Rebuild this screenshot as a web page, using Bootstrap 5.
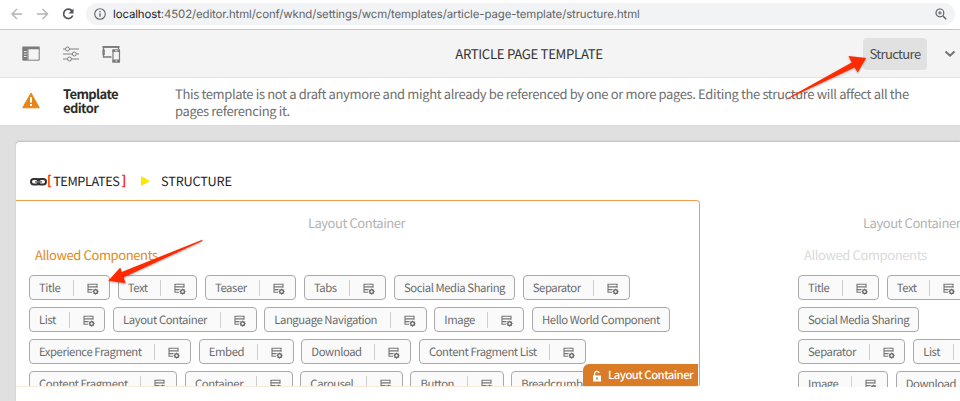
<!DOCTYPE html>
<html lang="en">
<head>
<meta charset="utf-8">
<title>Article Page Template</title>
<meta name="viewport" content="width=device-width, initial-scale=1">
<link href="https://cdn.jsdelivr.net/npm/bootstrap@5.3.0/dist/css/bootstrap.min.css" rel="stylesheet">
<style>
body{font-family:"Noto Sans CJK SC","Open Sans",sans-serif;font-size:13px;color:#323232;height:401px;background:#e0e0e0;text-rendering:geometricPrecision}
.browser{height:30px;background:#fff;border-bottom:1px solid #c6c6c6;padding:3px 5px 4px 10px}
.browser .navs{width:76px}
.address{height:22px;background:#f1f3f4;border-radius:11px;font:11.4px/22px Inter,"Liberation Sans",sans-serif;color:#5f6368;padding:0 8px 0 8px}
.address b{font-weight:400;color:#202124}
.url{margin-left:7px;letter-spacing:-.1px}
.toolbar{height:48px;background:#f4f4f4;border-bottom:1px solid #e2e2e2}
.tools{width:369px;padding-left:22px;gap:23px}
.page-name{font-size:13.2px;letter-spacing:-.32px;padding-top:1px;color:#323232}
.modes{width:271px;gap:17px;padding-right:4px}
.mode{width:64px;height:32px;border-radius:4px;background:#e1e1e1;font-size:13px;letter-spacing:-.63px;color:#4b4b4b;line-height:32px;padding:0;border:0;text-align:center}
.notice{height:47px;background:#fff;padding:6px 0 0 22px}
.notice-title{width:112px;margin-left:23px;letter-spacing:-.6px;font-weight:700;line-height:14px;color:#2c2c2c;padding-top:3px}
.notice-text{width:770px;line-height:17.4px;color:#6e6e6e;letter-spacing:-.367px;padding-top:1px}
.stage{height:276px;padding:16px 0 0 16px;background:#e0e0e0;border-top:1px solid #dadada}
.sheet{height:260px;background:#fff;border-radius:4px 0 0 0;box-shadow:0 -1px 2px #bcbcbc}
.crumbs{height:58px;padding:21px 0 0 14px;font-size:12.7px;line-height:36px;letter-spacing:-.17px;color:#222}
.crumbs b{color:#ff2600;font-weight:700;line-height:33px}
.crumb-root{margin:0 2px 0 1.5px;letter-spacing:-.6px;letter-spacing:-.4px}
.link-mark{margin-top:14px}
.crumb-arrow{margin:13px 11px 0 15px}
.layout-a{width:684px;height:187px;border:1px solid #f0a050;border-left:0;border-bottom-color:#fbe9d9;border-radius:0 4px 4px 0;padding:13px 0 0 13px}
.layout-b{width:260px;height:187px;margin-left:98px;padding:14px 0 0 0}
.cap{line-height:18px;color:#b3b3b3;letter-spacing:-.45px}
.layout-a .cap{text-align:center;margin-left:-15px}
.layout-b .cap{margin-left:65px;white-space:nowrap}
.allowed{line-height:18px;color:#e08a20;margin:14px 0 11px 6px;letter-spacing:-.39px}
.layout-b .allowed{color:#dadada}
.chips{gap:7.7px;margin-bottom:7px}
.chip{height:25px;border:1px solid #aaa;border-radius:4px;background:#fafafa;padding:1px 9px 0;font-size:11.3px;letter-spacing:-.43px;color:#6b6b6b;white-space:nowrap;flex:none}
.chip i{width:1px;height:16px;background:#cfcfcf;margin:0 13px 1px 12.7px}
.chip svg{margin-right:.9px;margin-top:1px}
.owner{right:1px;bottom:0;width:115px;height:22px;background:#da7b27;border-radius:6px 0 0 0;color:#fff;font-size:11.3px;letter-spacing:-.5px;font-weight:500;padding:1px 0 0 9px;white-space:nowrap}
.lock{flex:none;margin-right:4px}
.overlay{left:0;top:0;pointer-events:none;filter:drop-shadow(0 1px 1px rgba(0,0,0,.3))}
</style>
</head>
<body class="overflow-hidden position-relative">
<svg class="d-none">
<symbol id="cfg" viewBox="0 0 12 12"><path d="M5 9.3H1V1.2H10V4.8M1 3.9H10M1 6.6H5.5" fill="none" stroke="#757575" stroke-width="1.1"/><circle cx="8.6" cy="8.6" r="1.9" fill="none" stroke="#6b6b6b" stroke-width="1.4"/><path d="M8.6 5.7v1M8.6 10.5v1M5.7 8.6h1M10.5 8.6h1M6.6 6.6l.6.6M10 10l.6.6M10.6 6.6l-.6.6M7.2 10l-.6.6" stroke="#6b6b6b" stroke-width="1"/></symbol>
</svg>

<header class="browser d-flex align-items-center">
  <div class="navs d-flex align-items-center">
    <svg width="70" height="14" viewBox="0 0 70 14" fill="none" stroke="#b2b4b6" stroke-width="1.4"><path d="M12 7H2M7 2 2 7l5 5M27 7h10M32.500 2l5 5-5 5"/><path d="M62 3.900A4.700 4.700 0 1 0 62.700 8.500" stroke="#505357" stroke-width="1.7"/><path d="M63.500 1.500v5h-5z" fill="#505357" stroke="none"/></svg>
  </div>
  <div class="address flex-fill d-flex align-items-center">
    <svg width="12" height="12" viewBox="0 0 12 12" fill="none" stroke="#5f6368"><circle cx="6" cy="6" r="5.300" stroke-width="1.100"/><path d="M6 5.300v3.500M6 3v1.300" stroke-width="1.300"/></svg>
    <span class="url"><b>localhost</b>:4502/editor.html/conf/wknd/settings/wcm/templates/article-page-template/structure.html</span>
    <svg class="ms-auto" width="12" height="12" viewBox="0 0 12 12" fill="none" stroke="#5f6368" stroke-width="1.200"><circle cx="4.900" cy="4.900" r="3.900"/><path d="M7.800 7.800l3.400 3.400" stroke-width="1.500"/><path d="M3 4.900h3.800M4.900 3v3.800" stroke-width="1"/></svg>
  </div>
</header>

<nav class="toolbar d-flex align-items-center">
  <div class="tools d-flex align-items-center">
    <svg width="18" height="15" viewBox="0 0 18 15"><path d="M.8 2.500V14.200H17.200V2.500M6 3v11" fill="none" stroke="#7b7b7b"/><path d="M.3.500h17.400v2.800H.3zM1 3h4.500v11H1z" fill="#7b7b7b"/><path d="M2 5.500h2.600M2 8h2.600M2 10.500h2.600" stroke="#f4f4f4" stroke-width=".9"/></svg>
    <svg width="16" height="16" viewBox="0 0 16 16" fill="none" stroke="#808080"><path d="M0 3h2.500M6.500 3H16M0 8h9M13.500 8H16M0 13h4.500M8.500 13H16" stroke-width="1.200"/><circle cx="4.500" cy="3" r="2"/><circle cx="11.300" cy="8" r="2"/><circle cx="6.500" cy="13" r="2"/></svg>
    <svg width="19" height="18" viewBox="0 0 19 18" fill="none" stroke="#7b7b7b"><path d="M9.500 12H1.500V2.200H16.500V4" stroke-width="1.300"/><path d="M.5 1h17v1.800H.5zM.5 4.500h2.300v5.500H.5z" fill="#7b7b7b" stroke="none"/><path d="M11 5h6.500v12H11z" stroke-width="1.200"/><path d="M10.500 4.500h7.500V7h-7.500zM10.500 14.500h7.500v3h-7.500z" fill="#7b7b7b" stroke="none"/><path d="M13.500 16h1.500M13 5.800h2.500" stroke="#f4f4f4"/></svg>
  </div>
  <div class="page-name flex-fill text-center">ARTICLE PAGE TEMPLATE</div>
  <div class="modes d-flex align-items-center justify-content-end">
    <button class="mode" type="button">Structure</button>
    <svg width="12" height="8" viewBox="0 0 12 8" fill="none" stroke="#707070" stroke-width="1.900"><path d="M1.500 1.500 6 5.800 10.500 1.500"/></svg>
  </div>
</nav>

<section class="notice d-flex">
  <svg class="mt-2" width="18" height="17" viewBox="0 0 18 17"><path d="M9 1 17.300 15.800H.700z" fill="#e68619" stroke="#e68619" stroke-width="1" stroke-linejoin="round"/><path d="M9 5v5.500M9 12v2" stroke="#fff" stroke-width="2"/></svg>
  <div class="notice-title">Template<br>editor</div>
  <div class="notice-text">This template is not a draft anymore and might already be referenced by one or more pages. Editing the structure will affect all the<br>pages referencing it.</div>
</section>

<main class="stage">
  <div class="sheet">
    <div class="crumbs d-flex">
      <svg class="link-mark" width="17" height="10" viewBox="0 0 17 10" fill="none" stroke="#333" stroke-width="2"><rect x="1" y="2" width="8.500" height="5.500" rx="2.700"/><rect x="7.500" y="2" width="8.500" height="5.500" rx="2.700"/><path d="M5 4.800h7" stroke="#777" stroke-width="1.500"/></svg>
      <b>[</b><span class="crumb-root">TEMPLATES</span><b>]</b>
      <svg class="crumb-arrow" width="9" height="10" viewBox="0 0 9 10"><path d="M0 0 9 5 0 10z" fill="#ffe600"/></svg>
      <span>STRUCTURE</span>
    </div>
    <div class="d-flex overflow-hidden">
      <section class="layout-a overflow-hidden flex-shrink-0 position-relative">
        <div class="cap">Layout Container</div>
        <div class="allowed">Allowed Components</div>
        <div class="chips d-flex">
          <div class="chip d-flex align-items-center">Title<i></i><svg width="12" height="12"><use href="#cfg"/></svg></div>
          <div class="chip d-flex align-items-center">Text<i></i><svg width="12" height="12"><use href="#cfg"/></svg></div>
          <div class="chip d-flex align-items-center">Teaser<i></i><svg width="12" height="12"><use href="#cfg"/></svg></div>
          <div class="chip d-flex align-items-center">Tabs<i></i><svg width="12" height="12"><use href="#cfg"/></svg></div>
          <div class="chip d-flex align-items-center">Social Media Sharing</div>
          <div class="chip d-flex align-items-center">Separator<i></i><svg width="12" height="12"><use href="#cfg"/></svg></div>
        </div>
        <div class="chips d-flex">
          <div class="chip d-flex align-items-center">List<i></i><svg width="12" height="12"><use href="#cfg"/></svg></div>
          <div class="chip d-flex align-items-center">Layout Container<i></i><svg width="12" height="12"><use href="#cfg"/></svg></div>
          <div class="chip d-flex align-items-center">Language Navigation<i></i><svg width="12" height="12"><use href="#cfg"/></svg></div>
          <div class="chip d-flex align-items-center">Image<i></i><svg width="12" height="12"><use href="#cfg"/></svg></div>
          <div class="chip d-flex align-items-center">Hello World Component</div>
        </div>
        <div class="chips d-flex">
          <div class="chip d-flex align-items-center">Experience Fragment<i></i><svg width="12" height="12"><use href="#cfg"/></svg></div>
          <div class="chip d-flex align-items-center">Embed<i></i><svg width="12" height="12"><use href="#cfg"/></svg></div>
          <div class="chip d-flex align-items-center">Download<i></i><svg width="12" height="12"><use href="#cfg"/></svg></div>
          <div class="chip d-flex align-items-center">Content Fragment List<i></i><svg width="12" height="12"><use href="#cfg"/></svg></div>
        </div>
        <div class="chips d-flex">
          <div class="chip d-flex align-items-center">Content Fragment<i></i><svg width="12" height="12"><use href="#cfg"/></svg></div>
          <div class="chip d-flex align-items-center">Container<i></i><svg width="12" height="12"><use href="#cfg"/></svg></div>
          <div class="chip d-flex align-items-center">Carousel<i></i><svg width="12" height="12"><use href="#cfg"/></svg></div>
          <div class="chip d-flex align-items-center">Button<i></i><svg width="12" height="12"><use href="#cfg"/></svg></div>
          <div class="chip d-flex align-items-center">Breadcrumb<i></i><svg width="12" height="12"><use href="#cfg"/></svg></div>
        </div>
        <div class="owner position-absolute d-flex align-items-center"><svg class="lock" width="12" height="12" viewBox="0 0 12 12"><path d="M2.600 6V3.500A2.300 2.300 0 0 1 7.100 3" fill="none" stroke="#fff" stroke-width="1.300"/><path d="M1 5.500h8V11.500H1z" fill="#fff"/><path d="M5 7.300V9.800" stroke="#da7b27" stroke-width="1.500"/></svg>Layout Container</div>
      </section>
      <section class="layout-b overflow-hidden flex-shrink-0">
        <div class="cap">Layout Container</div>
        <div class="allowed">Allowed Components</div>
        <div class="chips d-flex">
          <div class="chip d-flex align-items-center">Title<i></i><svg width="12" height="12"><use href="#cfg"/></svg></div>
          <div class="chip d-flex align-items-center">Text<i></i><svg width="12" height="12"><use href="#cfg"/></svg></div>
        </div>
        <div class="chips d-flex"><div class="chip d-flex align-items-center">Social Media Sharing</div></div>
        <div class="chips d-flex">
          <div class="chip d-flex align-items-center">Separator<i></i><svg width="12" height="12"><use href="#cfg"/></svg></div>
          <div class="chip d-flex align-items-center">List<i></i><svg width="12" height="12"><use href="#cfg"/></svg></div>
        </div>
        <div class="chips d-flex">
          <div class="chip d-flex align-items-center">Image<i></i><svg width="12" height="12"><use href="#cfg"/></svg></div>
          <div class="chip d-flex align-items-center">Download<i></i><svg width="12" height="12"><use href="#cfg"/></svg></div>
        </div>
      </section>
    </div>
  </div>
</main>
<svg class="overlay position-absolute" width="960" height="401" fill="#ff2a00"><path d="M785.700 99.200 851.700 62.500 848.500 56 866.200 58 857.800 72.500 854.500 67.500 786.300 99.400z"/><path d="M202.300 239.700 121.700 272 120.300 267.500 108.300 280.700 125.500 283.300 123.800 277.200 202.400 240.900z"/></svg>
<script src="https://cdn.jsdelivr.net/npm/bootstrap@5.3.0/dist/js/bootstrap.bundle.min.js"></script>
</body>
</html>
